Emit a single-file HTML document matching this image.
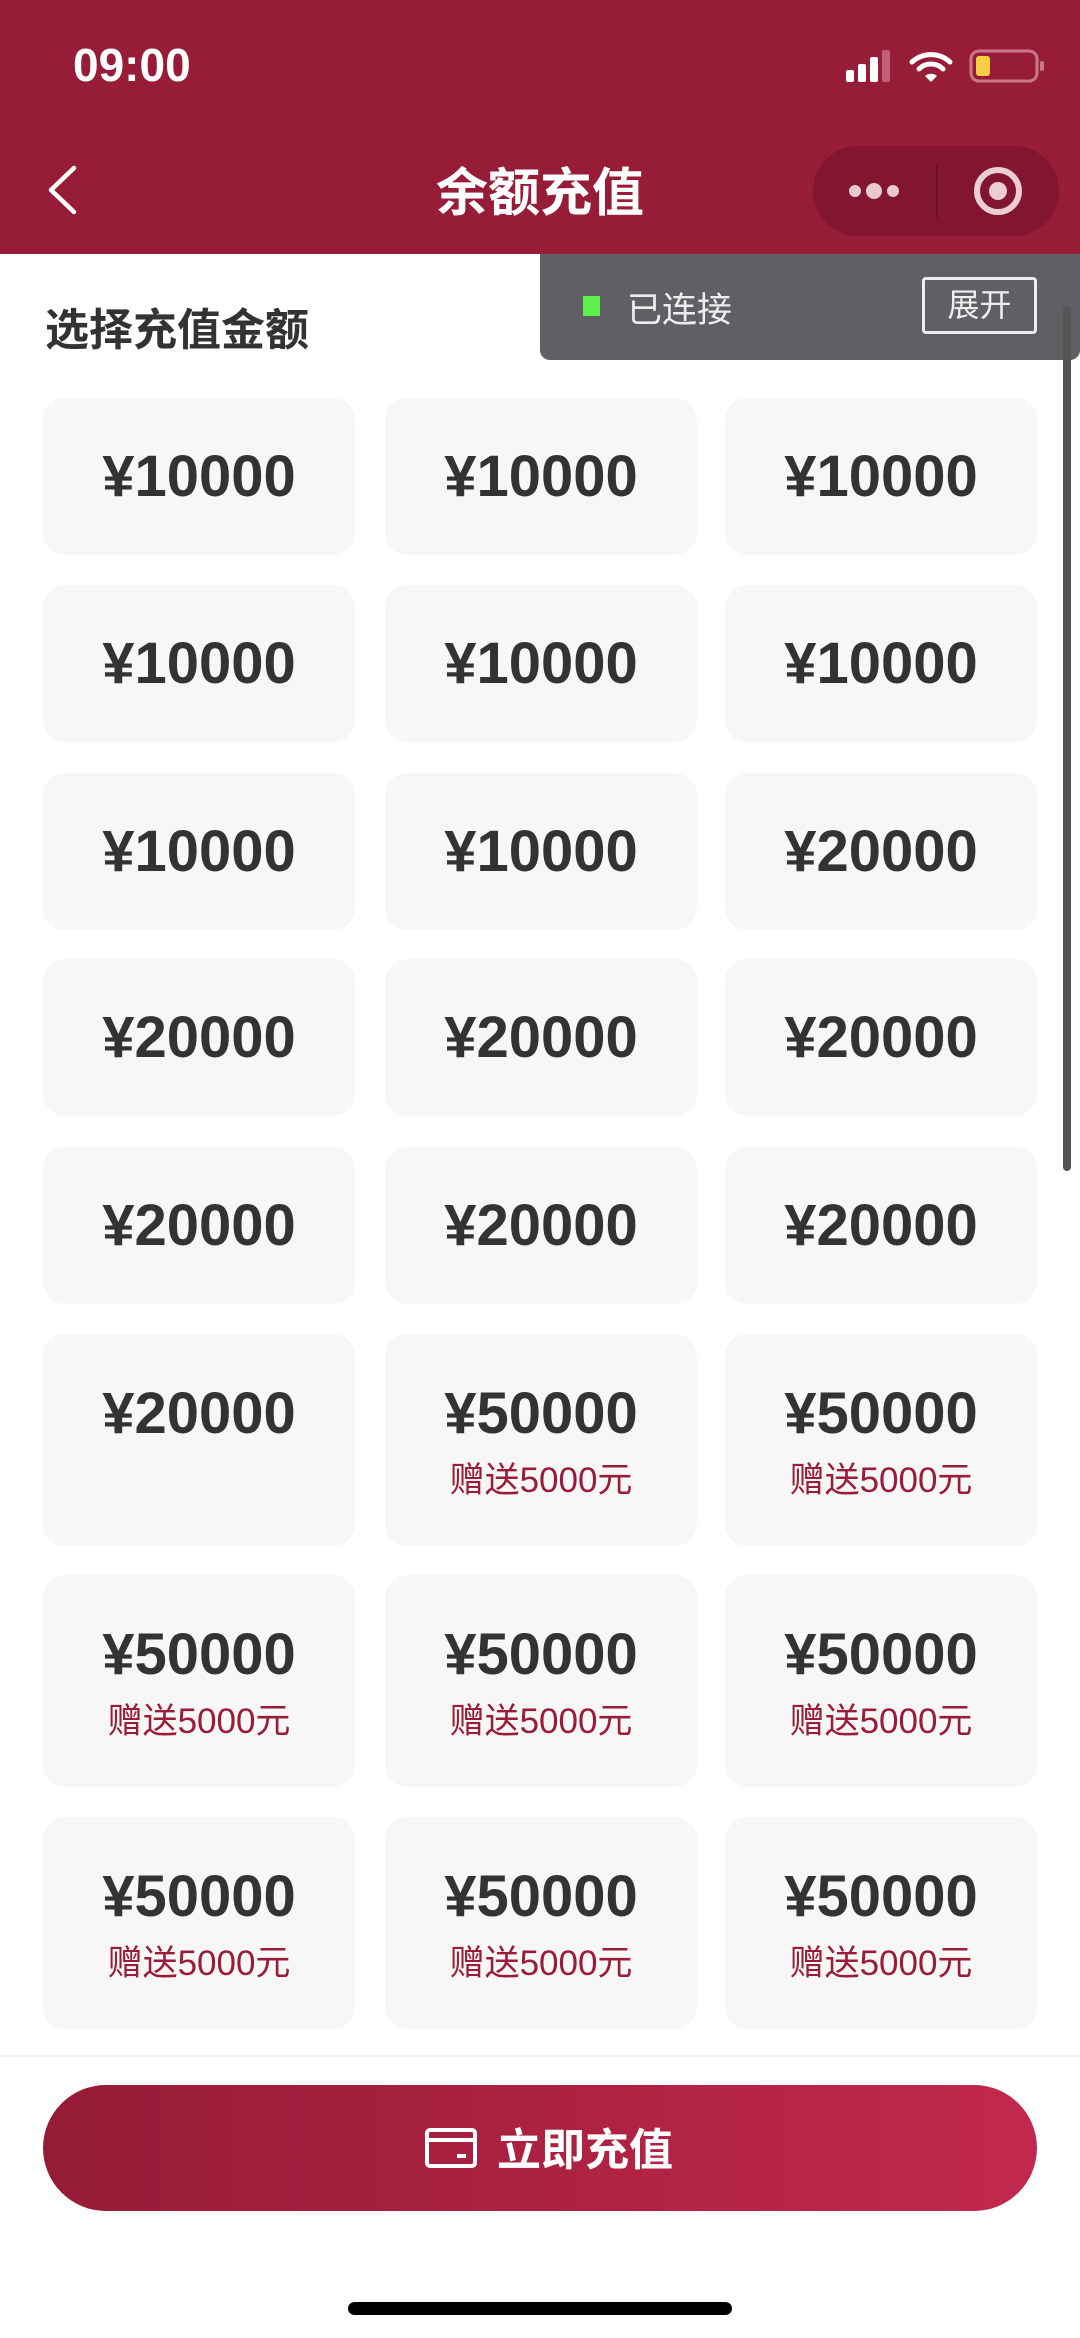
<!DOCTYPE html>
<html><head><meta charset="utf-8"><style>
*{margin:0;padding:0;box-sizing:border-box}
body{width:1080px;height:2338px;background:#fff;position:relative;overflow:hidden;font-family:"Liberation Sans","Noto Sans CJK SC",sans-serif}
.hdr{position:absolute;left:0;top:0;width:1080px;height:254px;background:#961c38}
.abs{position:absolute}
.card{position:absolute;width:312px;background:#f7f7f7;border-radius:22px;text-align:center}
.amt{position:absolute;left:0;right:0;font-size:58px;font-weight:bold;color:#333;line-height:1}
.sub{position:absolute;left:0;right:0;font-size:35px;color:#9a1c38;line-height:1}
</style></head><body>
<div class="hdr"></div>
<div class="abs" style="left:73px;top:38px;color:#fff;font-size:46px;font-weight:bold">09:00</div>
<svg class="abs" style="left:846px;top:48px" width="200" height="36" viewBox="0 0 200 36">
<rect x="0" y="22" width="8" height="12" rx="2" fill="#fff"/><rect x="12" y="16" width="8" height="18" rx="2" fill="#fff"/><rect x="24" y="9" width="8" height="25" rx="2" fill="#fff"/><rect x="36" y="2" width="8" height="32" rx="2" fill="#c06078"/>
<path d="M66 14a28 28 0 0 1 38 0" stroke="#fff" stroke-width="5" fill="none" stroke-linecap="round"/>
<path d="M73 21a17 17 0 0 1 24 0" stroke="#fff" stroke-width="5" fill="none" stroke-linecap="round"/>
<path d="M79 28l6 6 6-6a9 9 0 0 0-12 0z" fill="#fff"/>
<rect x="125" y="3" width="66" height="30" rx="8" fill="none" stroke="#c9788a" stroke-width="3"/>
<rect x="130" y="8" width="14" height="20" rx="3" fill="#f7cf46"/>
<rect x="194" y="13" width="4" height="10" rx="2" fill="#c9788a"/>
</svg>
<svg class="abs" style="left:46px;top:165px" width="32" height="50" viewBox="0 0 32 50"><path d="M28 3L5 25l23 22" stroke="#fff" stroke-width="4.5" fill="none" stroke-linecap="round" stroke-linejoin="round"/></svg>
<div class="abs" style="left:0;width:1080px;top:151px;text-align:center;color:#fff;font-size:52px;font-weight:bold">余额充值</div>
<div class="abs" style="left:813px;top:146px;width:246px;height:90px;border-radius:45px;background:#82152f"></div>
<div class="abs" style="left:936px;top:164px;width:2px;height:54px;background:#6e1127"></div>
<svg class="abs" style="left:844px;top:176px" width="200" height="30" viewBox="0 0 200 30">
<circle cx="11" cy="15" r="6" fill="#e8c9d1"/><circle cx="30" cy="15" r="8" fill="#e8c9d1"/><circle cx="49" cy="15" r="6" fill="#e8c9d1"/>
</svg>
<svg class="abs" style="left:970px;top:163px" width="56" height="56" viewBox="0 0 56 56"><circle cx="28" cy="28" r="21" stroke="#eccdd5" stroke-width="6" fill="none"/><circle cx="28" cy="28" r="9" fill="#eccdd5"/></svg>

<div class="abs" style="left:45px;top:294px;font-size:44px;font-weight:bold;color:#333">选择充值金额</div>

<div class="abs" style="left:540px;top:254px;width:540px;height:106px;background:#5f5f64;border-radius:0 0 10px 10px"></div>
<div class="abs" style="left:583px;top:296px;width:17px;height:20px;background:#5cf04a"></div>
<div class="abs" style="left:627px;top:282px;font-size:35px;color:#eee">已连接</div>
<div class="abs" style="left:922px;top:277px;width:115px;height:57px;border:3px solid #eee;border-radius:4px;color:#eee;font-size:32px;text-align:center;line-height:50px">展开</div>
<div class="abs" style="left:1063px;top:306px;width:8px;height:865px;background:#555;border-radius:4px"></div>

<div class="card" style="left:43px;top:398px;height:157px"><div class="amt" style="top:50px">¥10000</div></div>
<div class="card" style="left:385px;top:398px;height:157px"><div class="amt" style="top:50px">¥10000</div></div>
<div class="card" style="left:725px;top:398px;height:157px"><div class="amt" style="top:50px">¥10000</div></div>
<div class="card" style="left:43px;top:585px;height:157px"><div class="amt" style="top:50px">¥10000</div></div>
<div class="card" style="left:385px;top:585px;height:157px"><div class="amt" style="top:50px">¥10000</div></div>
<div class="card" style="left:725px;top:585px;height:157px"><div class="amt" style="top:50px">¥10000</div></div>
<div class="card" style="left:43px;top:773px;height:157px"><div class="amt" style="top:50px">¥10000</div></div>
<div class="card" style="left:385px;top:773px;height:157px"><div class="amt" style="top:50px">¥10000</div></div>
<div class="card" style="left:725px;top:773px;height:157px"><div class="amt" style="top:50px">¥20000</div></div>
<div class="card" style="left:43px;top:959px;height:157px"><div class="amt" style="top:50px">¥20000</div></div>
<div class="card" style="left:385px;top:959px;height:157px"><div class="amt" style="top:50px">¥20000</div></div>
<div class="card" style="left:725px;top:959px;height:157px"><div class="amt" style="top:50px">¥20000</div></div>
<div class="card" style="left:43px;top:1147px;height:157px"><div class="amt" style="top:50px">¥20000</div></div>
<div class="card" style="left:385px;top:1147px;height:157px"><div class="amt" style="top:50px">¥20000</div></div>
<div class="card" style="left:725px;top:1147px;height:157px"><div class="amt" style="top:50px">¥20000</div></div>

<div class="card" style="left:43px;top:1334px;height:212px"><div class="amt" style="top:51px">¥20000</div></div>
<div class="card" style="left:385px;top:1334px;height:212px"><div class="amt" style="top:51px">¥50000</div><div class="sub" style="top:129px">赠送5000元</div></div>
<div class="card" style="left:725px;top:1334px;height:212px"><div class="amt" style="top:51px">¥50000</div><div class="sub" style="top:129px">赠送5000元</div></div>
<div class="card" style="left:43px;top:1575px;height:212px"><div class="amt" style="top:51px">¥50000</div><div class="sub" style="top:129px">赠送5000元</div></div>
<div class="card" style="left:385px;top:1575px;height:212px"><div class="amt" style="top:51px">¥50000</div><div class="sub" style="top:129px">赠送5000元</div></div>
<div class="card" style="left:725px;top:1575px;height:212px"><div class="amt" style="top:51px">¥50000</div><div class="sub" style="top:129px">赠送5000元</div></div>
<div class="card" style="left:43px;top:1817px;height:212px"><div class="amt" style="top:51px">¥50000</div><div class="sub" style="top:129px">赠送5000元</div></div>
<div class="card" style="left:385px;top:1817px;height:212px"><div class="amt" style="top:51px">¥50000</div><div class="sub" style="top:129px">赠送5000元</div></div>
<div class="card" style="left:725px;top:1817px;height:212px"><div class="amt" style="top:51px">¥50000</div><div class="sub" style="top:129px">赠送5000元</div></div>

<div class="abs" style="left:0;top:2055px;width:1080px;height:283px;background:#fff;border-top:2px solid #f2f2f2"></div>
<div class="abs" style="left:43px;top:2085px;width:994px;height:126px;border-radius:63px;background:linear-gradient(90deg,#951b37,#c2284e)"></div>
<svg class="abs" style="left:424px;top:2127px" width="54" height="42" viewBox="0 0 54 42"><rect x="3" y="3" width="48" height="36" rx="3" stroke="#fff" stroke-width="4" fill="none"/><line x1="3" y1="13" x2="51" y2="13" stroke="#fff" stroke-width="4"/><line x1="33" y1="29" x2="42" y2="29" stroke="#fff" stroke-width="4"/></svg>
<div class="abs" style="left:497px;top:2114px;font-size:44px;font-weight:bold;color:#fff">立即充值</div>
<div class="abs" style="left:348px;top:2302px;width:384px;height:13px;border-radius:7px;background:#000"></div>
</body></html>
